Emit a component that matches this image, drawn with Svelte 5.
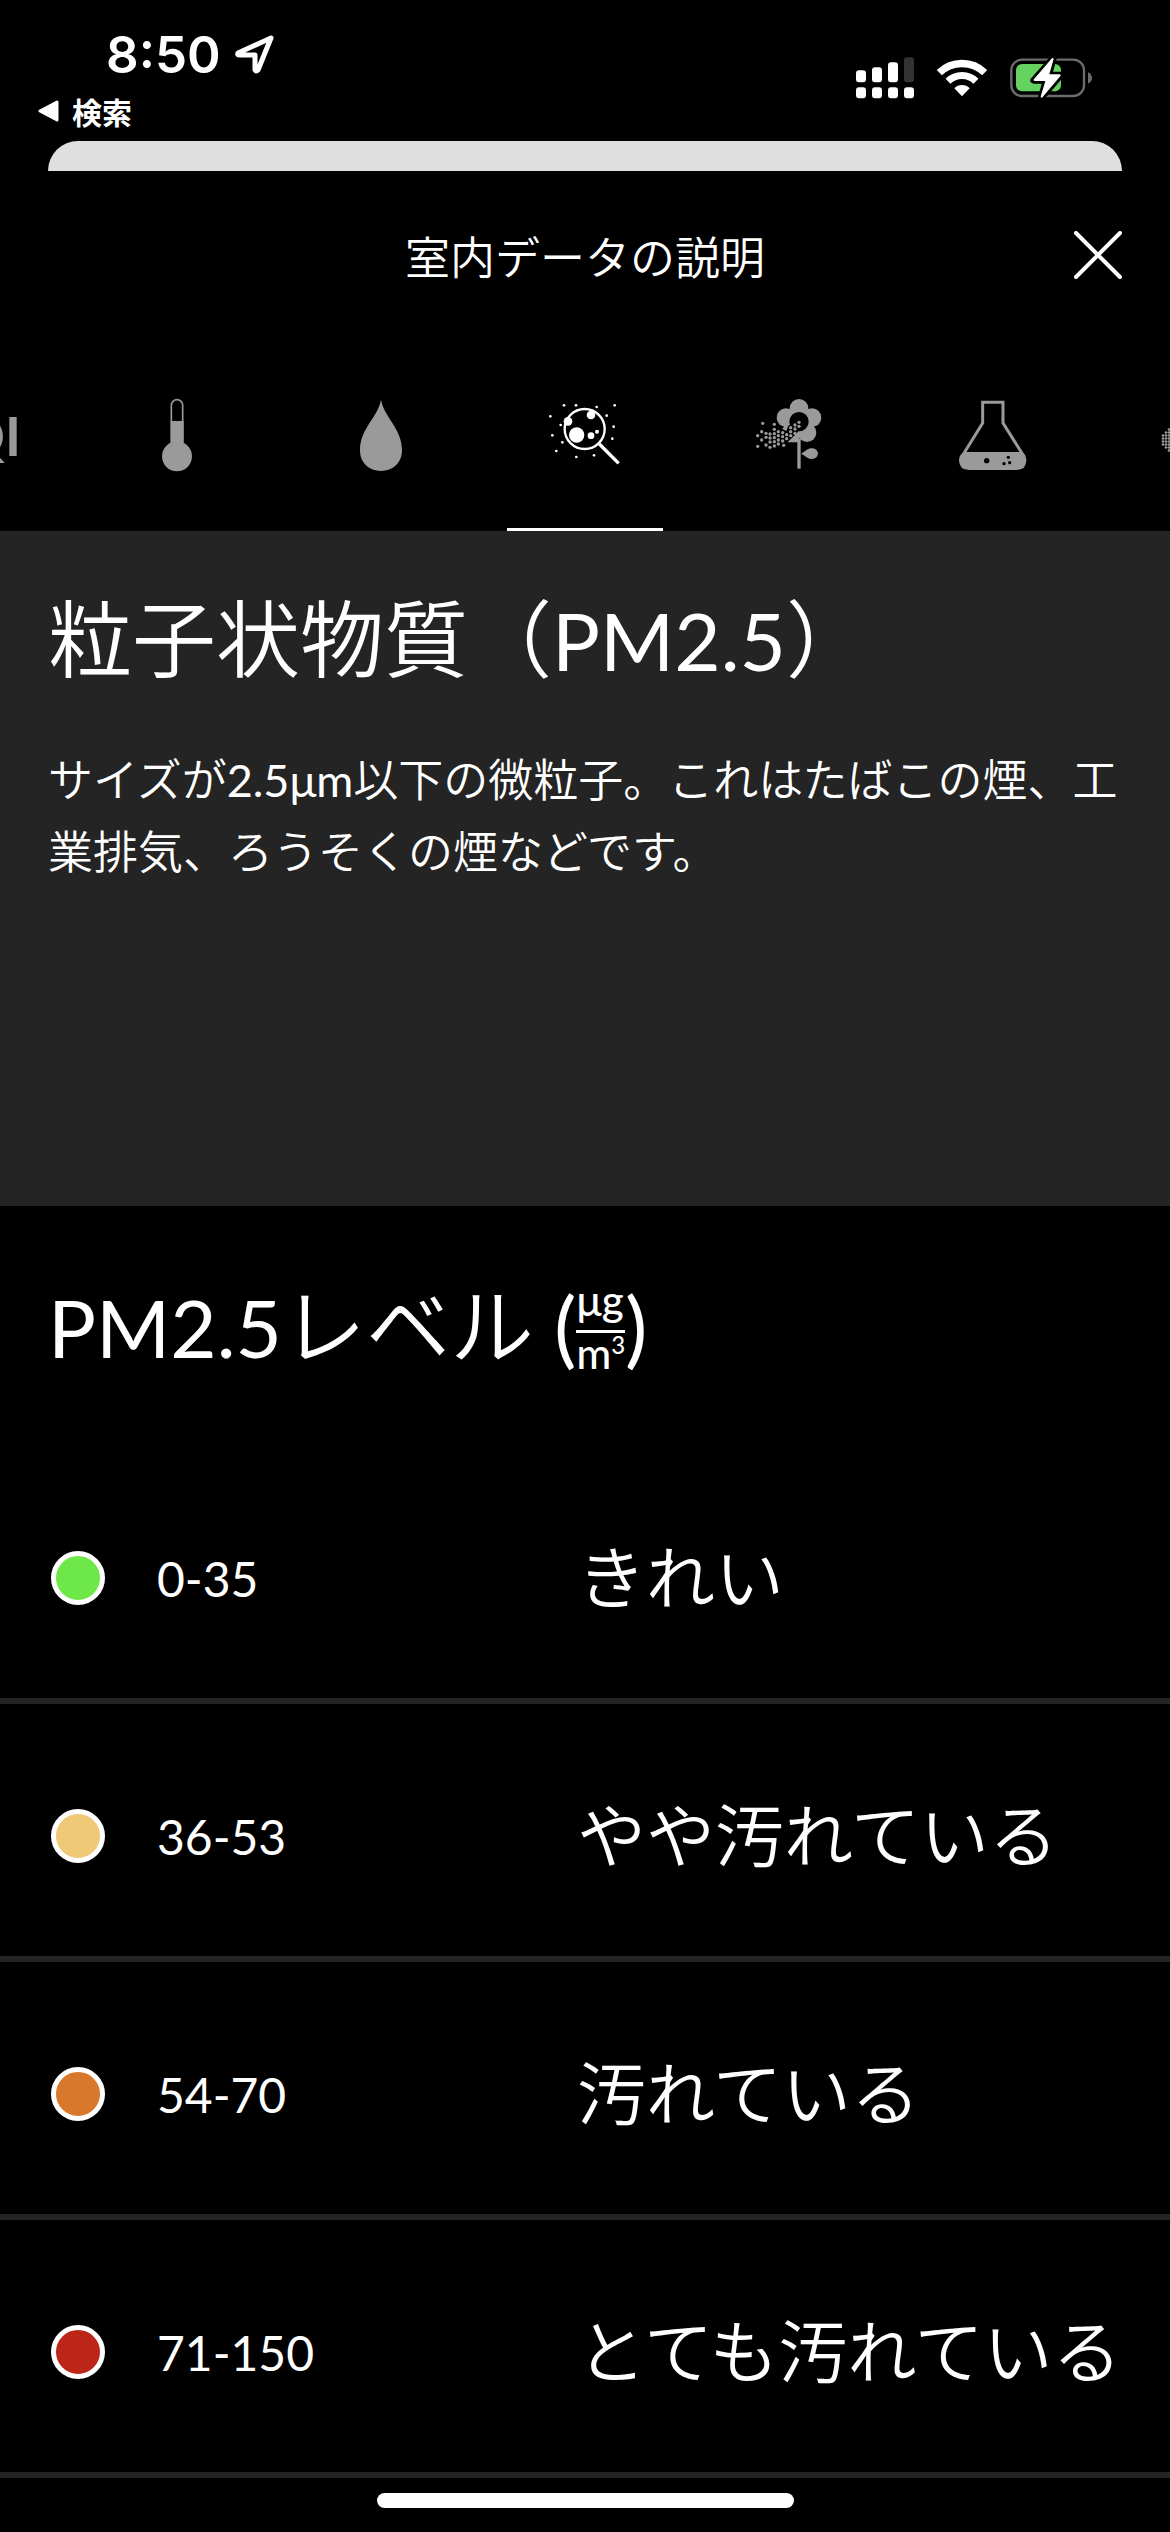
<script>
  const levels = [
    { range: '0-35', label: 'きれい', color: '#6de848' },
    { range: '36-53', label: 'やや汚れている', color: '#efc878' },
    { range: '54-70', label: '汚れている', color: '#d9782a' },
    { range: '71-150', label: 'とても汚れている', color: '#bb2618' },
  ];

  const tabs = [
    { id: 'aqi', name: 'AQI' },
    { id: 'temp', name: '温度' },
    { id: 'humidity', name: '湿度' },
    { id: 'pm25', name: 'PM2.5' },
    { id: 'pollen', name: '花粉' },
    { id: 'voc', name: 'VOC' },
    { id: 'pm10', name: 'PM10' },
  ];

  let active = $state('pm25');

  // loose particles around the magnifier
  const dust = [
    [57, 31], [93, 31], [155, 36], [209, 31], [16, 64], [185, 62], [47, 90],
    [206, 95], [22, 121], [52, 142], [202, 131], [34, 168], [94, 186], [147, 181],
  ];

  // pollen grains, one column per entry: x, then each y
  const pollen = [
    [26, 122, 154], [38, 110, 135], [41, 85], [51, 115, 127, 150],
    [63, 117, 129, 141, 157], [76, 88, 103, 116, 128, 140, 153],
    [88, 110, 122, 135, 147], [101, 113, 125, 138], [104, 151],
    [113, 119, 131], [125, 98, 110, 122], [138, 90, 102, 115], [150, 82, 94],
  ].flatMap(([x, ...ys]) => ys.map((y) => [x, y]));

  // halftone cloud, columns grow towards the middle
  const halftone = [];
  for (let i = -11; i <= 11; i++) {
    const rows = Math.min(13 - Math.abs(i), 8);
    for (let j = -rows + 0.5; j < rows; j++) {
      halftone.push([117 + i * 9, 135 + j * 9]);
    }
  }
</script>

<div class="screen">
  <div class="status">
    <div class="status-left">
      <div class="clock">
        <span>8:50</span>
        <svg width="40" height="40" viewBox="0 0 40 40" aria-hidden="true">
          <path d="M36 4 L3 19 Q2 21 4 21 H20 V36 Q21 38 23 36 Z" fill="none" stroke="#fff" stroke-width="5" stroke-linejoin="round" />
        </svg>
      </div>
      <a class="back" href="#search">
        <svg width="22" height="22" viewBox="0 0 22 22" aria-hidden="true">
          <path d="M2 11 L19 2 V20 Z" fill="#fff" stroke="#fff" stroke-width="3" stroke-linejoin="round" />
        </svg>
        検索
      </a>
    </div>
    <div class="status-right">
      <svg width="58" height="42" viewBox="168 80 174 126" aria-hidden="true">
        <g fill="#fff">
          <rect x="168" y="120" width="30" height="36" rx="9" />
          <rect x="216" y="111" width="30" height="45" rx="9" />
          <rect x="264" y="96" width="30" height="60" rx="9" />
          <rect x="312" y="81" width="30" height="75" rx="9" fill="#333" />
          {#each [168, 216, 264, 312] as x}
            <rect {x} y="171" width="30" height="33" rx="9" />
          {/each}
        </g>
      </svg>
      <svg width="52" height="42" viewBox="407 80 156 126" aria-hidden="true">
        <g fill="none" stroke="#fff">
          <path d="M417 127 A98 98 0 0 1 553 127" stroke-width="22" />
          <path d="M443 153 A60 60 0 0 1 527 153" stroke-width="21" />
        </g>
        <path d="M462 174 A32 32 0 0 1 508 174 L485 198 Z" fill="#fff" />
      </svg>
      <svg width="82" height="42" viewBox="627 80 246 126" aria-hidden="true">
        <rect x="631" y="88" width="218" height="109" rx="32" fill="none" stroke="#6c6c6e" stroke-width="7" />
        <path d="M861 126 Q873 132 873 143 T861 160 Z" fill="#6c6c6e" />
        <rect x="645" y="101" width="135" height="82" rx="18" fill="#65d15f" />
        <path d="M757 83 L698 150 H735 L721 202 L779 134 H743 Z" fill="#fff" stroke="#000" stroke-width="20" stroke-linejoin="round" />
        <path d="M755 86 L701 149 H737 L722 199 L776 135 H741 Z" fill="#fff" stroke="#fff" stroke-width="6" stroke-linejoin="round" />
      </svg>
    </div>
  </div>

  <div class="behind"></div>

  <header>
    <h1>室内データの説明</h1>
    <button class="close" aria-label="閉じる">
      <svg width="48" height="48" viewBox="0 0 48 48">
        <path d="M2 2 L46 46 M46 2 L2 46" stroke="#fff" stroke-width="4" stroke-linecap="round" />
      </svg>
    </button>
  </header>

  <div class="tabs" role="tablist">
    {#each tabs as tab}
      <button
        class="tab"
        class:active={active === tab.id}
        role="tab"
        aria-selected={active === tab.id}
        aria-label={tab.name}
        onclick={() => (active = tab.id)}
      >
        {#if tab.id === 'aqi'}
          AQI
        {:else}
          <svg width="80" height="80" viewBox="0 0 240 240" fill="currentColor">
            {#if tab.id === 'temp'}
              <rect x="103" y="14" width="34" height="140" rx="17" fill="none" stroke="currentColor" stroke-width="5" />
              <rect x="101" y="78" width="39" height="80" />
              <circle cx="120" cy="184" r="45" />
            {:else if tab.id === 'humidity'}
              <path d="M120 14 C130 68 183 100 183 166 C183 203 156 228 120 228 C84 228 57 203 57 166 C57 100 110 68 120 14 Z" />
            {:else if tab.id === 'pm25'}
              <circle cx="119" cy="102" r="60" fill="none" stroke="currentColor" stroke-width="7" />
              <path d="M163 147 L221 205" stroke="currentColor" stroke-width="10" />
              <circle cx="95" cy="120" r="23" />
              <circle cx="138" cy="60" r="13" />
              <circle cx="69" cy="79" r="13" />
              <circle cx="138" cy="122" r="10" />
              <circle cx="156" cy="110" r="6" />
              {#each dust as [cx, cy]}
                <circle {cx} {cy} r="4" />
              {/each}
            {:else if tab.id === 'pollen'}
              <circle cx="150" cy="40" r="28" />
              <circle cx="111" cy="68" r="28" />
              <circle cx="189" cy="68" r="28" />
              <circle cx="174" cy="113" r="28" />
              <circle cx="126" cy="113" r="28" />
              <circle cx="150" cy="82" r="34" />
              <circle cx="150" cy="80" r="29" fill="#000" />
              <path d="M88 97 L112 108 L118 92 L150 74 L154 102 L132 128 L114 142 L88 150 Z" fill="#000" />
              <path d="M116 142 L134 124 L150 112 V142 Z" />
              <rect x="145" y="130" width="10" height="91" />
              <path d="M157 176 C170 168 176 160 188 160 C213 160 213 192 188 192 C176 192 170 183 157 176 Z" />
              {#each pollen as [cx, cy]}
                <circle {cx} {cy} r="5" />
              {/each}
            {:else if tab.id === 'voc'}
              <path d="M89 22 H150 V84 L209 178 H31 L89 84 Z" fill="none" stroke="currentColor" stroke-width="9" />
              <path d="M33 171 H207 Q220 180 220 196 Q220 225 190 225 H49 Q18 225 18 196 Q18 180 33 171 Z" />
              <g fill="#000">
                <circle cx="101" cy="197" r="8" />
                <circle cx="166" cy="187" r="5" />
                <circle cx="153" cy="206" r="5" />
                <circle cx="170" cy="203" r="5" />
              </g>
            {:else}
              {#each halftone as [cx, cy]}
                <circle {cx} {cy} r="4" />
              {/each}
            {/if}
          </svg>
        {/if}
      </button>
    {/each}
  </div>

  <section class="about">
    <h2>粒子状物質（<span class="latin">PM2.5</span>）</h2>
    <p>サイズが2.5μm以下の微粒子。これはたばこの煙、工業排気、ろうそくの煙などです。</p>
  </section>

  <section>
    <div class="levels-head">
      <h2><span class="latin">PM2.5</span>レベル</h2>
      <div class="unit">
        <span class="paren">(</span>
        <span class="fraction">
          <span class="top">μg</span>
          <span class="bottom">m<sup>3</sup></span>
        </span>
        <span class="paren">)</span>
      </div>
    </div>

    <table>
      <tbody>
        {#each levels as level}
          <tr>
            <td class="swatch"><span class="dot" style="background: {level.color}"></span></td>
            <td class="range">{level.range}</td>
            <td class="label">{level.label}</td>
          </tr>
        {/each}
      </tbody>
    </table>
  </section>

  <div class="home"></div>
</div>

<style>
  :global(body) {
    background: #000;
  }

  .screen {
    background: #000;
    color: #fff;
    font-family: Lato, 'Noto Sans CJK JP DemiLight', 'Noto Sans CJK JP', sans-serif;
    font-weight: 400;
    overflow: hidden;
  }

  h1, h2, p {
    margin: 0;
    font-weight: 400;
  }

  button {
    background: none;
    border: 0;
    padding: 0;
    color: inherit;
    font-family: inherit;
  }

  svg {
    display: block;
  }

  .status {
    display: flex;
    justify-content: space-between;
    box-sizing: border-box;
    height: 141px;
    padding: 24px 78px 0 38px;
  }

  .clock {
    display: flex;
    align-items: center;
    gap: 14px;
    height: 60px;
    padding-left: 68px;
    font-family: Inter, sans-serif;
    font-size: 51px;
    font-weight: 600;
  }

  .back {
    display: flex;
    align-items: center;
    gap: 12px;
    height: 54px;
    color: #fff;
    font-family: 'Noto Sans CJK JP', sans-serif;
    font-size: 30px;
    font-weight: 700;
    text-decoration: none;
  }

  .status-right {
    display: flex;
    gap: 22px;
    padding-top: 33px;
  }

  .behind {
    height: 30px;
    margin: 0 48px;
    background: #dfdfdf;
    border-radius: 30px 30px 0 0;
  }

  header {
    display: grid;
    grid-template-columns: 1fr auto 1fr;
    align-items: center;
    height: 168px;
    padding: 0 48px;
  }

  h1 {
    grid-column: 2;
    font-size: 45px;
  }

  .close {
    justify-self: end;
  }

  .tabs {
    display: flex;
    justify-content: center;
    gap: 48px;
    height: 192px;
  }

  .tab {
    flex: none;
    display: flex;
    align-items: center;
    justify-content: center;
    box-sizing: border-box;
    width: 156px;
    border-top: 3px solid transparent;
    border-bottom: 3px solid transparent;
    color: #9a9a9a;
    font-size: 54px;
    font-weight: 700;
  }

  .tab.active {
    color: #fff;
    border-bottom-color: #fff;
  }

  .about {
    box-sizing: border-box;
    min-height: 675px;
    padding: 48px;
    background: #242424;
  }

  h2 {
    font-size: 84px;
    line-height: 120px;
  }

  .latin {
    font-size: 80px;
  }

  .about p {
    margin-top: 44px;
    font-size: 45px;
    line-height: 72px;
  }

  .levels-head {
    display: flex;
    align-items: center;
    gap: 20px;
    height: 240px;
    padding: 0 48px;
  }

  .unit {
    display: flex;
    align-items: center;
    font-size: 42px;
    font-weight: 500;
  }

  .paren {
    font-size: 84px;
    font-weight: 400;
    line-height: 84px;
  }

  .fraction {
    display: flex;
    flex-direction: column;
    line-height: 40px;
  }

  .top {
    padding-bottom: 10px;
    border-bottom: 3px solid #fff;
  }

  sup {
    font-size: 24px;
    line-height: 0;
  }

  table {
    width: 100%;
    table-layout: fixed;
    border-spacing: 0;
  }

  td {
    box-sizing: border-box;
    height: 258px;
    padding: 12px 0 0;
    border-bottom: 6px solid #242424;
  }

  .swatch {
    width: 157px;
    padding-left: 51px;
  }

  .dot {
    display: block;
    box-sizing: border-box;
    width: 54px;
    height: 54px;
    border: 5px solid #fff;
    border-radius: 50%;
  }

  .range {
    width: 420px;
    font-size: 48px;
  }

  .label {
    font-size: 69px;
    line-height: 96px;
    white-space: nowrap;
  }

  .home {
    width: 417px;
    height: 15px;
    margin: 15px auto 24px;
    background: #fff;
    border-radius: 8px;
  }
</style>
